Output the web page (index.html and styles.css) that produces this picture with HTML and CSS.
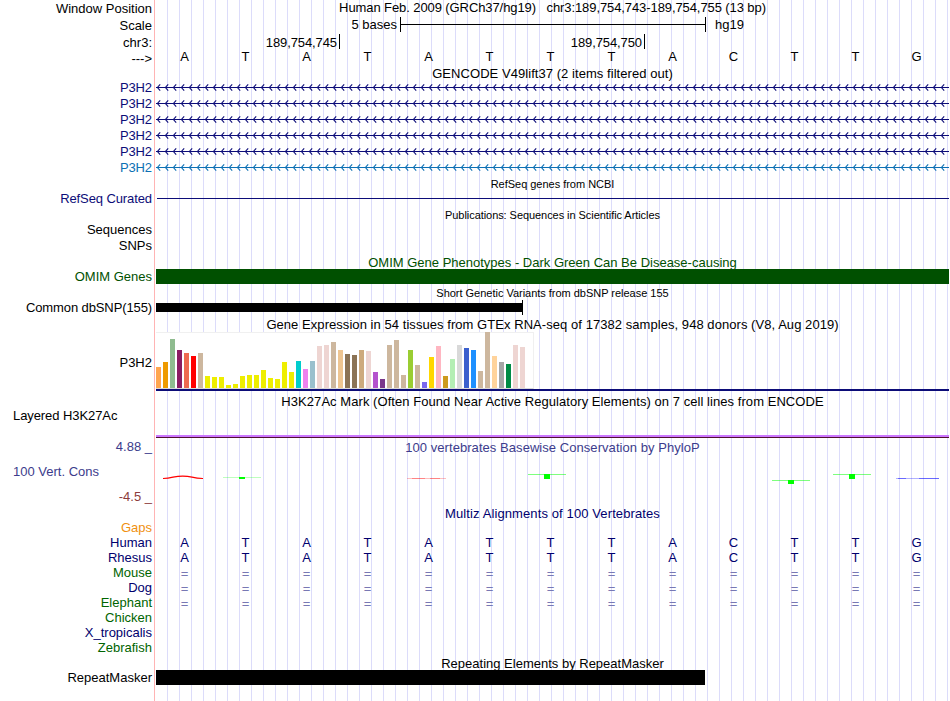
FILE: index.html
```html
<!DOCTYPE html>
<html>
<head>
    <meta charset="utf-8">
    <title>Genome Browser chr3:189,754,743-189,754,755</title>
    <link rel="stylesheet" href="styles.css">
</head>
<body>
<div class="browser">
    <!-- position header -->
    <div class="row head">
        <div class="label">Window Position</div>
        <div class="track title window">Human Feb. 2009 (GRCh37/hg19)&nbsp;&nbsp; chr3:189,754,743-189,754,755 (13 bp)</div>
    </div>
    <div class="row head">
        <div class="label">Scale</div>
        <div class="track scale"><span class="bases">5 bases</span><span class="ruler"></span><span class="db">hg19</span></div>
    </div>
    <div class="row head">
        <div class="label">chr3:</div>
        <div class="track coords"><span class="coord first">189,754,745</span><span class="coord">189,754,750</span></div>
    </div>
    <div class="row head arrow_row">
        <div class="label">---&gt;</div>
        <div class="track seq top_seq" data-seq="ATATATTTACTTG"></div>
    </div>

    <!-- gencode -->
    <div class="row gencode_title"><div class="label"></div><div class="track title">GENCODE V49lift37 (2 items filtered out)</div></div>
    <div class="row gene"><div class="label">P3H2</div><div class="track"><svg class="intron"><use href="#intron"/></svg></div></div>
    <div class="row gene"><div class="label">P3H2</div><div class="track"><svg class="intron"><use href="#intron"/></svg></div></div>
    <div class="row gene"><div class="label">P3H2</div><div class="track"><svg class="intron"><use href="#intron"/></svg></div></div>
    <div class="row gene"><div class="label">P3H2</div><div class="track"><svg class="intron"><use href="#intron"/></svg></div></div>
    <div class="row gene"><div class="label">P3H2</div><div class="track"><svg class="intron"><use href="#intron"/></svg></div></div>
    <div class="row gene light"><div class="label">P3H2</div><div class="track"><svg class="intron"><use href="#intron_light"/></svg></div></div>

    <!-- refseq / publications -->
    <div class="row sub_title"><div class="label"></div><div class="track title small">RefSeq genes from NCBI</div></div>
    <div class="row refseq"><div class="label">RefSeq Curated</div><div class="track"><div class="thin_line"></div></div></div>
    <div class="row sub_title pubs"><div class="label"></div><div class="track title small">Publications: Sequences in Scientific Articles</div></div>
    <div class="row"><div class="label">Sequences</div><div class="track"></div></div>
    <div class="row"><div class="label">SNPs</div><div class="track"></div></div>

    <!-- omim / dbsnp -->
    <div class="row omim_title"><div class="label"></div><div class="track title">OMIM Gene Phenotypes - Dark Green Can Be Disease-causing</div></div>
    <div class="row omim"><div class="label">OMIM Genes</div><div class="track"><div class="bar"></div></div></div>
    <div class="row snp_title"><div class="label"></div><div class="track title small">Short Genetic Variants from dbSNP release 155</div></div>
    <div class="row snp"><div class="label">Common dbSNP(155)</div><div class="track"><div class="bar"></div><div class="tick"></div></div></div>

    <!-- gtex -->
    <div class="row gtex_title"><div class="label"></div><div class="track title">Gene Expression in 54 tissues from GTEx RNA-seq of 17382 samples, 948 donors (V8, Aug 2019)</div></div>
    <div class="row gtex"><div class="label">P3H2</div><div class="track"><div class="chart" id="chart"></div><div class="gene_line"></div></div></div>

    <!-- h3k27ac -->
    <div class="row mark">
        <div class="label left">Layered H3K27Ac</div>
        <div class="track"><div class="title">H3K27Ac Mark (Often Found Near Active Regulatory Elements) on 7 cell lines from ENCODE</div><div class="mark_line"></div></div>
    </div>

    <!-- conservation -->
    <div class="row cons">
        <div class="label">
            <div class="max">4.88 _</div>
            <div class="name">100 Vert. Cons</div>
            <div class="min">-4.5 _</div>
        </div>
        <div class="track">
            <div class="title">100 vertebrates Basewise Conservation by PhyloP</div>
            <svg class="wiggle" width="795" height="52" viewBox="155 454 795 52">
                <path d="M163 478.5 Q168 478.5 173 477.2 Q183 475.2 192 477.2 Q197 478.5 203 478.5" fill="none" stroke="#f00" stroke-width="1.2"/>
                <path d="M223 477.5H261" stroke="#0f0" opacity=".25"/>
                <path d="M239 477h6v2h-6z" fill="#0f0"/>
                <path d="M407 478.5H446" stroke="#f00" opacity=".25"/>
                <path d="M412 478.5H425M430 478.5H440" stroke="#f00" opacity=".3"/>
                <path d="M528 474.5H566M772 480.5H810M833 474.5H871" stroke="#0f0" opacity=".5"/>
                <path d="M544 474h6v5h-6zM788 480h6v4h-6zM849 474h6v5h-6z" fill="#0f0"/>
                <path d="M896 478.5H939" stroke="#00f" opacity=".3"/>
                <path d="M898 478.5H906M919 478.5H939" stroke="#00f" opacity=".4"/>
            </svg>
        </div>
    </div>

    <!-- multiz -->
    <div class="row multiz_title"><div class="label"></div><div class="track title">Multiz Alignments of 100 Vertebrates</div></div>
    <div class="row species gaps"><div class="label">Gaps</div><div class="track"></div></div>
    <div class="row species"><div class="label">Human</div><div class="track seq" data-seq="ATATATTTACTTG"></div></div>
    <div class="row species"><div class="label">Rhesus</div><div class="track seq" data-seq="ATATATTTACTTG"></div></div>
    <div class="row species green"><div class="label">Mouse</div><div class="track seq same" data-seq="============="></div></div>
    <div class="row species"><div class="label">Dog</div><div class="track seq same" data-seq="============="></div></div>
    <div class="row species green"><div class="label">Elephant</div><div class="track seq same" data-seq="============="></div></div>
    <div class="row species green"><div class="label">Chicken</div><div class="track"></div></div>
    <div class="row species"><div class="label">X_tropicalis</div><div class="track"></div></div>
    <div class="row species green"><div class="label">Zebrafish</div><div class="track"></div></div>

    <!-- repeatmasker -->
    <div class="row rmsk_title"><div class="label"></div><div class="track title">Repeating Elements by RepeatMasker</div></div>
    <div class="row rmsk"><div class="label">RepeatMasker</div><div class="track"><div class="bar"></div></div></div>
</div>

<svg class="defs" width="0" height="0">
    <defs>
        <pattern id="chevron" width="8" height="16" patternUnits="userSpaceOnUse">
            <path d="M4.2 4.3L1.4 7.5L4.2 10.7" fill="none" stroke="#0c0c78" stroke-width="1.1"/>
        </pattern>
        <pattern id="chevron_light" width="8" height="16" patternUnits="userSpaceOnUse">
            <path d="M4.2 4.3L1.4 7.5L4.2 10.7" fill="none" stroke="#0c70b4" stroke-width="1.1"/>
        </pattern>
        <g id="intron">
            <rect x="0" y="0" width="792" height="16" fill="url(#chevron)"/>
            <rect x="0" y="7" width="793" height="1" fill="#0c0c78"/>
        </g>
        <g id="intron_light">
            <rect x="0" y="0" width="792" height="16" fill="url(#chevron_light)"/>
            <rect x="0" y="7" width="793" height="1" fill="#0c70b4"/>
        </g>
    </defs>
</svg>
<script src="script.js"></script>
</body>
</html>
```
FILE: styles.css
```css
*{
    box-sizing: border-box;
    padding: 0;
    margin: 0;
}
body{
    width: 950px;
    height: 701px;
    overflow: hidden;
    background: #fff;
    color: #000;
    font: 13px/15px "Liberation Sans", Arial, sans-serif;
}
.browser{
    width: 949px;
    height: 701px;
    background:
        linear-gradient(#ffb4b4, #ffb4b4) 154px 0 / 1px 100% no-repeat,
        repeating-linear-gradient(to right, #dcdcfa 0, #dcdcfa 1px, transparent 1px, transparent 12px) 167px 0 no-repeat;
}
.row{
    display: flex;
    height: 16px;
    white-space: nowrap;
}
.label{
    width: 155px;
    flex: none;
    padding-right: 3px;
    text-align: right;
}
.track{
    flex: 1;
    min-width: 0;
    padding-left: 1px;
}
.title{
    text-align: center;
    letter-spacing: .055px;
}
.small{
    font-size: 11px;
    letter-spacing: -.02px;
}
/* header */
.head{
    height: 17px;
}
.head .label{
    line-height: 17px;
}
.window{
    letter-spacing: -.09px;
}
.scale{
    display: flex;
    padding-left: 0;
}
.bases{
    width: 242px;
    text-align: right;
}
.ruler{
    width: 306px;
    height: 15px;
    margin-left: 3px;
    border-left: 1px solid #000;
    border-right: 1px solid #000;
    background: linear-gradient(#000, #000) 0 7px / 100% 1px no-repeat;
}
.db{
    margin-left: 9px;
}
.coords{
    display: flex;
    padding-left: 0;
    letter-spacing: -.1px;
}
.coord{
    width: 305px;
    height: 15px;
    padding-right: 2px;
    border-right: 1px solid #000;
    text-align: right;
    line-height: 17px;
}
.coord.first{
    width: 185px;
}
.arrow_row{
    height: 15px;
}
.arrow_row .label{
    line-height: 15px;
}
.seq{
    flex: none;
    display: grid;
    grid-template-columns: repeat(13, 1fr);
    width: 793px;
    margin-left: -1px;
    padding-left: 0;
    text-align: center;
}
.top_seq{
    line-height: 11px;
}
/* genes */
.gencode_title{
    height: 14px;
}
.gene, .refseq{
    color: #0c0c78;
}
.gene.light{
    color: #0c70b4;
}
.gene .label, .refseq .label{
    letter-spacing: -.1px;
}
.intron{
    display: block;
    width: 793px;
    height: 16px;
}
.sub_title{
    height: 15px;
    line-height: 17px;
}
.pubs .title{
    letter-spacing: -.06px;
}
.thin_line{
    height: 1px;
    margin: 7px 0 0 1px;
    background: #0c0c78;
}
/* omim */
.omim_title, .omim{
    height: 15px;
    color: #005000;
}
.omim_title{
    line-height: 17px;
}
.omim_title .title{
    letter-spacing: 0;
}
.omim .bar{
    height: 15px;
    background: #005000;
}
/* dbsnp */
.snp_title{
    line-height: 19px;
}
.snp{
    height: 15px;
}
.snp .label{
    letter-spacing: -.11px;
}
.snp .track{
    display: flex;
    align-items: center;
}
.snp .bar{
    width: 366px;
    height: 9px;
    background: #000;
}
.snp .tick{
    width: 1px;
    height: 15px;
    background: #000;
}
/* gtex */
.gtex_title{
    height: 17px;
    line-height: 19px;
}
.gtex{
    height: 59px;
}
.gtex .label{
    padding-top: 23px;
}
.chart{
    display: flex;
    align-items: flex-end;
    width: 378px;
    height: 57px;
    background: #fff;
    border: 1px solid #f0f0f0;
    border-left: 0;
    border-bottom-color: #d8d8d8;
}
.chart i{
    flex: none;
    width: 5px;
    margin-right: 2px;
}
.gene_line{
    height: 2px;
    background: #0c0c78;
}
/* h3k27ac */
.mark{
    height: 47px;
}
.label.left{
    padding: 17px 0 0 13px;
    text-align: left;
    letter-spacing: -.08px;
}
.mark .title{
    height: 44px;
    padding-top: 3px;
}
.mark_line{
    height: 3px;
    border-top: 2px solid #cc77ff;
    background: #501030;
}
/* conservation */
.cons{
    height: 68px;
    color: #3c3c8c;
}
.cons .track{
    padding: 2px 0 0 0;
}
.cons .title{
    height: 14px;
    padding-left: 1px;
}
.wiggle{
    display: block;
}
.max{
    padding-top: 1px;
}
.name{
    margin-top: 10px;
    padding-left: 13px;
    text-align: left;
}
.min{
    margin-top: 10px;
    color: #8c3c3c;
}
/* multiz */
.multiz_title{
    height: 14px;
    color: #00006e;
}
.multiz_title .title{
    letter-spacing: .11px;
}
.species{
    height: 15px;
    color: #00006e;
}
.species.gaps{
    color: #f09010;
}
.species.green{
    color: #006400;
}
.species .same{
    color: #7878b4;
    line-height: 17px;
}
/* repeatmasker */
.rmsk_title{
    height: 15px;
    line-height: 17px;
}
.rmsk_title .title{
    letter-spacing: 0;
}
.rmsk .bar{
    width: 549px;
    height: 15px;
    background: #000;
}
.defs{
    display: block;
}
```
FILE: script.js
```js
// fill the base rows
var rows = document.querySelectorAll(".seq");
for (var i = 0; i < rows.length; i++) {
    var seq = rows[i].getAttribute("data-seq");
    for (var j = 0; j < seq.length; j++) {
        var base = document.createElement("span");
        base.textContent = seq[j];
        rows[i].appendChild(base);
    }
}

// tissue bars: [height, color]
var tissues = [
    [21, "#ffa54f"], [26, "#ee9a00"], [49, "#8fbc8f"], [38, "#8b1c62"], [35, "#ee6a50"], [32, "#ff0000"], [35, "#cdb79e"],
    [12, "#eeee00"], [11, "#eeee00"], [11, "#eeee00"], [3, "#eeee00"], [4, "#eeee00"], [12, "#eeee00"], [13, "#eeee00"],
    [13, "#eeee00"], [18, "#eeee00"], [10, "#eeee00"], [9, "#eeee00"], [26, "#eeee00"], [16, "#eeee00"], [27, "#00cdcd"],
    [19, "#ee82ee"], [27, "#9ac0cd"], [42, "#eed5d2"], [43, "#eed5d2"], [46, "#cdb79e"], [38, "#eec591"], [34, "#8b7355"],
    [33, "#8b7355"], [38, "#cdaa7d"], [37, "#eed5d2"], [16, "#b452cd"], [9, "#7a378b"], [43, "#cdb79e"], [48, "#cdb79e"],
    [13, "#cdb79e"], [38, "#9acd32"], [23, "#cdb79e"], [6, "#7a67ee"], [31, "#ffd700"], [42, "#ffb6c1"], [12, "#cd9b1d"],
    [29, "#b4eeb4"], [43, "#d9d9d9"], [40, "#3a5fcd"], [38, "#1e90ff"], [17, "#cdb79e"], [56, "#cdb79e"], [32, "#ffd39b"],
    [26, "#a6a6a6"], [24, "#008b45"], [43, "#eed5d2"], [41, "#eed5d2"]
];
var chart = document.getElementById("chart");
tissues.forEach(function(t){
    var bar = document.createElement("i");
    bar.style.height = t[0] + "px";
    bar.style.background = t[1];
    chart.appendChild(bar);
});
```
